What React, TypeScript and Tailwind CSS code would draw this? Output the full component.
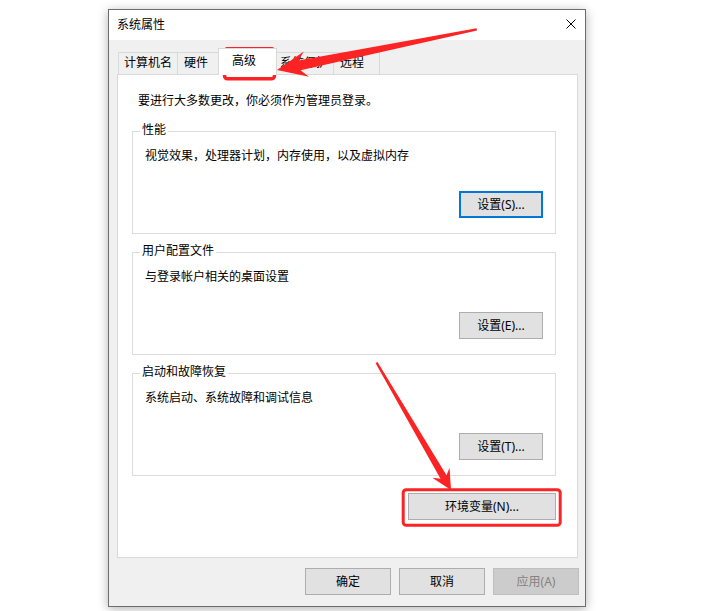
const tabs = [
  { label: '计算机名', w: 'w-[60px]', pl: 'pl-[5px]' },
  { label: '硬件', w: 'w-[42px]', pl: 'pl-[6px]' },
  { label: '高级', w: 'w-[59px]', pl: 'pl-[13px]', active: true },
  { label: '系统保护', w: 'w-[58px]', pl: 'pl-[3px]' },
  { label: '远程', w: 'w-[47px]', pl: 'pl-[6px]' },
]

const groups = [
  { title: '性能', desc: '视觉效果，处理器计划，内存使用，以及虚拟内存', button: '设置(S)...', focused: true },
  { title: '用户配置文件', desc: '与登录帐户相关的桌面设置', button: '设置(E)...' },
  { title: '启动和故障恢复', desc: '系统启动、系统故障和调试信息', button: '设置(T)...' },
]

function WinButton({ label, width, focused, disabled }: { label: string; width: string; focused?: boolean; disabled?: boolean }) {
  let cls = 'border-[#adadad] bg-[#e1e1e1] text-black'
  if (focused) cls = 'border-2 border-[#0078d7] bg-[#e1e1e1] text-black'
  if (disabled) cls = 'border-[#bfbfbf] bg-[#cccccc] text-[#838383]'
  return (
    <div className={`${width} h-[27px] border flex items-center justify-center text-[12px] leading-[12px] ${cls}`}>
      {label}
    </div>
  )
}

export default function App() {
  return (
    <div className="relative w-[720px] h-[611px] bg-white overflow-hidden pt-[9px] pl-[108px] font-['Noto_Sans','Noto_Sans_CJK_SC',sans-serif] text-black">
      <div className="w-[478px] h-[598px] border border-[#6d6d6d] bg-[#f0f0f0] flex flex-col shadow-[0_2px_10px_rgba(0,0,0,0.3)]">
        {/* title bar */}
        <div className="h-[30px] bg-white flex items-center justify-between pl-[8px] pr-[9px]">
          <span className="text-[12px] leading-[12px]">系统属性</span>
          <svg width="10" height="10" viewBox="0 0 10 10" className="mb-[2px]">
            <path d="M0.5 0.5 L9.5 9.5 M9.5 0.5 L0.5 9.5" stroke="#000" strokeWidth="1" />
          </svg>
        </div>

        <div className="flex-1 px-[8px]">
          {/* tabs */}
          <div className="mt-[8px] h-[26px] flex items-end pl-[1px]">
            {tabs.map((t, i) =>
              t.active ? (
                <div key={t.label} className={`${t.w} ${t.pl} -ml-px h-[27px] -mb-px relative z-10 bg-white border border-b-0 border-[#d9d9d9] flex items-center pb-[3px] text-[12px] leading-[12px]`}>
                  {t.label}
                </div>
              ) : (
                <div key={t.label} className={`${t.w} ${t.pl} ${i > 0 ? '-ml-px' : ''} h-[22px] bg-[#f0f0f0] border border-b-0 border-[#d9d9d9] flex items-center pb-[1px] text-[12px] leading-[12px]`}>
                  {t.label}
                </div>
              )
            )}
          </div>

          {/* panel */}
          <div className="w-[461px] h-[484px] border border-[#d9d9d9] bg-white pt-[20px]">
            <div className="pl-[20px] text-[12px] leading-[12px]">要进行大多数更改，你必须作为管理员登录。</div>

            <div className="pl-[14px]">
              {groups.map((g, i) => (
                <div key={g.title} className={`${i === 0 ? 'mt-[24px]' : 'mt-[18px]'} relative w-[424px] h-[103px] border border-[#dcdcdc]`}>
                  <span className="absolute -top-[8px] left-[7px] bg-white px-[2px] text-[12px] leading-[12px]">{g.title}</span>
                  <div className="pl-[12px] pt-[18px] text-[12px] leading-[12px]">{g.desc}</div>
                  <div className="mt-[29px] pr-[12px] flex justify-end">
                    <WinButton label={g.button} width="w-[84px]" focused={g.focused} />
                  </div>
                </div>
              ))}

              <div className="mt-[17px] w-[424px] flex justify-end">
                <WinButton label="环境变量(N)..." width="w-[148px]" />
              </div>
            </div>
          </div>

          {/* bottom buttons */}
          <div className="mt-[10px] -mr-[2px] flex justify-end gap-[8px]">
            <WinButton label="确定" width="w-[86px]" />
            <WinButton label="取消" width="w-[86px]" />
            <WinButton label="应用(A)" width="w-[86px]" disabled />
          </div>
        </div>
      </div>

      {/* red annotations */}
      <svg className="absolute inset-0 pointer-events-none" width="720" height="611" viewBox="0 0 720 611">
        <rect x="224.5" y="48.8" width="50" height="30" rx="3" fill="none" stroke="#fb2323" strokeWidth="3.5" />
        <rect x="403.2" y="489.8" width="157" height="35.4" rx="3" fill="none" stroke="#fb2323" strokeWidth="3" />
        <polygon
          fill="#fb2323"
          points="277,70 303.8,51.4 298.5,60.5 476.5,28.3 477,30.5 300.5,70.3 309,76.8"
        />
        <polygon
          fill="#fb2323"
          points="451,490 449.5,467.7 446.5,475.2 377.5,362 375.5,363 440.5,478.8 432.3,477.7"
        />
      </svg>
    </div>
  )
}
